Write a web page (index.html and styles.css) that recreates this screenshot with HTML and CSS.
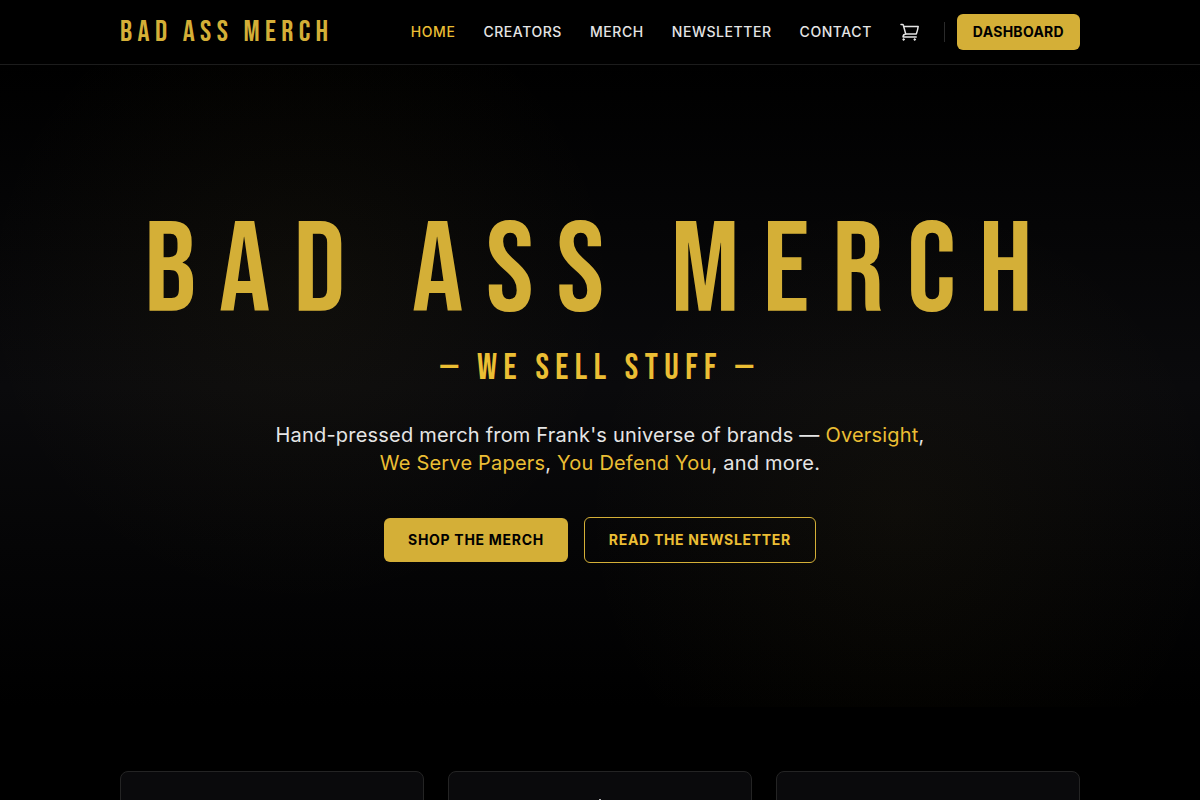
FILE: index.html
```html
<!DOCTYPE html>
<html lang="en">
<head>
  <meta charset="UTF-8">
  <meta name="viewport" content="width=device-width, initial-scale=1.0">
  <title>Bad Ass Merch</title>
  <link rel="stylesheet" href="styles.css">
</head>
<body>
  <header class="header">
    <div class="container header-inner">
      <a href="#" class="logo">BAD ASS MERCH</a>
      <nav class="nav">
        <a href="#" class="nav-link active">HOME</a>
        <a href="#" class="nav-link">CREATORS</a>
        <a href="#" class="nav-link">MERCH</a>
        <a href="#" class="nav-link">NEWSLETTER</a>
        <a href="#" class="nav-link">CONTACT</a>
        <a href="#" class="cart" aria-label="Cart">
          <svg width="20" height="20" viewBox="0 0 20 20" fill="none" stroke="currentColor" stroke-width="1.5" stroke-linecap="round" stroke-linejoin="round">
            <path d="M1 2.4h1.3c.5 0 .9.3 1 .8l.4 1.3 2 7.4c-1.6.2-2.6 1.4-2.7 3h13.2"/>
            <path d="M3.7 4.5h14.5c-.3 2.6-1 5-1.9 7.4H5.7"/>
            <circle cx="3.6" cy="17.5" r=".9" fill="currentColor" stroke-width=".6"/>
            <circle cx="14.7" cy="17.5" r=".9" fill="currentColor" stroke-width=".6"/>
          </svg>
        </a>
        <div class="account">
          <a href="#" class="btn btn-small">DASHBOARD</a>
        </div>
      </nav>
    </div>
  </header>

  <main>
    <section class="hero">
      <h1 class="hero-title">BAD ASS MERCH</h1>
      <p class="hero-tagline">— WE SELL STUFF —</p>
      <p class="hero-text">
        Hand-pressed merch from Frank's universe of brands —
        <a href="#">Oversight</a>, <a href="#">We Serve Papers</a>, <a href="#">You Defend You</a>, and more.
      </p>
      <div class="hero-actions">
        <a href="#" class="btn">SHOP THE MERCH</a>
        <a href="#" class="btn btn-outline">READ THE NEWSLETTER</a>
      </div>
    </section>

    <section class="container features">
      <div class="card"></div>
      <div class="card">
        <svg width="32" height="32" viewBox="0 0 32 32" fill="none" stroke="currentColor" stroke-width="1">
          <path d="M16 3l3 10 9 3-9 3-3 9-3-9-9-3 9-3z"/>
        </svg>
      </div>
      <div class="card"></div>
    </section>
  </main>
</body>
</html>
```
FILE: styles.css
```css
* {
  margin: 0;
  padding: 0;
  box-sizing: border-box;
}

body {
  font-family: Inter, sans-serif;
  background: #000;
  color: #e5e5e5;
}

a {
  color: inherit;
  text-decoration: none;
}

.container {
  width: 100%;
  max-width: 960px;
  margin: 0 auto;
}

/* Header */
.header {
  background: #000;
  border-bottom: 1px solid #1c1c1c;
}

.header-inner {
  display: flex;
  align-items: center;
  justify-content: space-between;
  height: 64px;
}

.logo,
.hero-title,
.hero-tagline {
  font-family: "Bebas Neue", "Liberation Sans Narrow", sans-serif;
  letter-spacing: 0.18em;
  color: #d4af37;
}

.logo {
  font-size: 30px;
}

.nav {
  display: flex;
  align-items: center;
  gap: 28px;
  font-size: 14px;
  line-height: 20px;
}

.nav-link {
  font-weight: 500;
  letter-spacing: 0.04em;
}

.nav-link.active {
  color: #ebbe34;
}

.cart {
  display: flex;
}

.account {
  display: flex;
  align-items: center;
  gap: 12px;
  margin-left: -4px;
}

.account::before {
  content: "";
  width: 1px;
  height: 20px;
  background: #2a2a2a;
}

/* Buttons */
.btn {
  padding: 12px 24px;
  border-radius: 6px;
  background: #d4af37;
  color: #000;
  font-size: 14px;
  font-weight: 700;
  line-height: 20px;
  letter-spacing: 0.05em;
}

.btn-small {
  padding: 8px 16px;
  letter-spacing: 0.02em;
}

.btn-outline {
  border: 1px solid #d4af37;
  background: transparent;
  color: #ebbe34;
}

/* Hero */
.hero {
  display: flex;
  flex-direction: column;
  align-items: center;
  padding: 144px 24px;
  text-align: center;
  background:
    radial-gradient(circle at 25% 35%, rgba(212, 175, 55, 0.04), transparent 320px),
    radial-gradient(circle at 75% 70%, rgba(212, 175, 55, 0.04), transparent 320px),
    linear-gradient(#000, #0a0a0c 50%, #000);
}

.hero-title {
  font-size: 128px;
  font-weight: 400;
  line-height: 128px;
  white-space: nowrap;
}

.hero-tagline {
  margin-top: 12px;
  font-size: 36px;
  line-height: 40px;
  color: #ebbe34;
}

.hero-text {
  max-width: 672px;
  margin-top: 32px;
  font-size: 20px;
  line-height: 28px;
  letter-spacing: 0.01em;
}

.hero-text a {
  color: #ebbe34;
}

.hero-actions {
  display: flex;
  align-items: center;
  gap: 16px;
  margin-top: 40px;
}

/* Cards */
.features {
  display: grid;
  grid-template-columns: repeat(3, 1fr);
  gap: 24px;
  padding: 64px 0;
}

.card {
  min-height: 180px;
  padding: 24px;
  border: 1px solid #242424;
  border-radius: 8px;
  background: #0a0a0c;
  text-align: center;
}
```
